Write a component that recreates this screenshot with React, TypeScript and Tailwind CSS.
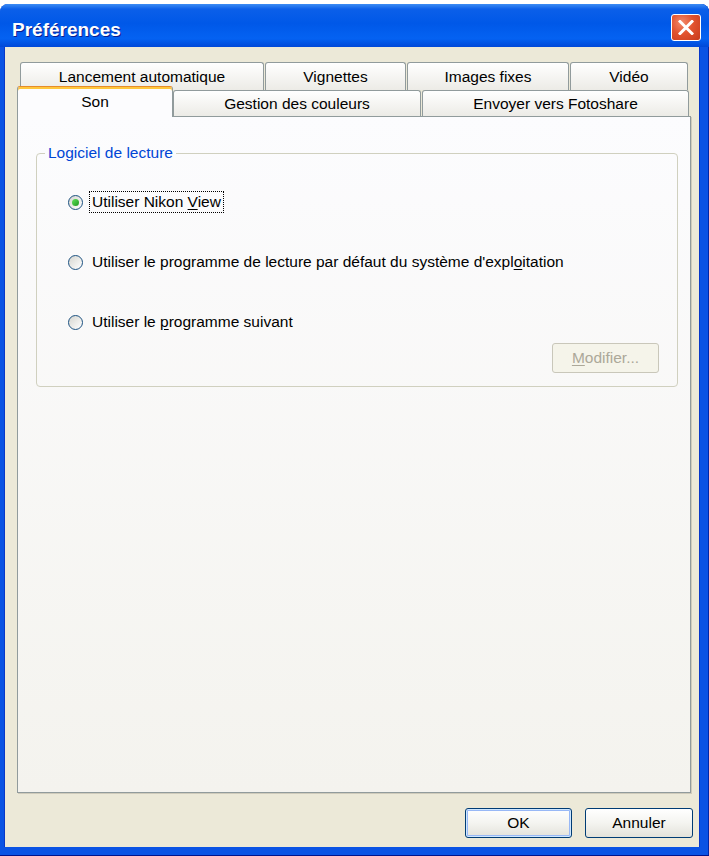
import React from 'react';

// Windows XP "Préférences" dialog, tab "Son"

const Tab: React.FC<{ label: string; className: string }> = ({ label, className }) => (
  <div
    className={`flex items-center justify-center border border-b-0 border-[#919b9c] rounded-t-[3px] bg-gradient-to-b from-white to-[#ecebe6] text-black ${className}`}
  >
    {label}
  </div>
);

const Radio: React.FC<{ checked?: boolean }> = ({ checked }) => (
  <span className="flex items-center justify-center w-[15px] h-[15px] shrink-0 rounded-full border border-[#1c5180] bg-gradient-to-br from-[#d6d6d0] to-white">
    {checked && <span className="w-[7px] h-[7px] rounded-full bg-gradient-to-br from-[#5ee25a] to-[#1e9a1e]" />}
  </span>
);

const RadioRow: React.FC<{ checked?: boolean; focused?: boolean; children: React.ReactNode; className: string }> = ({
  checked,
  focused,
  children,
  className,
}) => (
  <div className={`flex items-center h-[24px] pl-[31px] ${className}`}>
    <Radio checked={checked} />
    <span
      className={`ml-[6px] px-[2px] leading-[20px] border border-dotted ${focused ? 'border-black' : 'border-transparent'}`}
    >
      {children}
    </span>
  </div>
);

const XpButton: React.FC<{ children: React.ReactNode; className: string }> = ({ children, className }) => (
  <div
    className={`flex items-center justify-center h-[30px] rounded-[3px] border border-[#003c74] bg-gradient-to-b from-white via-[#f4f4f0] to-[#e3e2da] text-black ${className}`}
  >
    {children}
  </div>
);

export default function App() {
  return (
    <div className="w-[709px] h-[856px] bg-white font-['Liberation_Sans',Arial,sans-serif] text-[15.5px] text-black">
      <div className="mt-[4px] h-[852px] flex flex-col rounded-t-[8px] bg-[#0a53e4] shadow-[inset_0_-1px_0_#00138c,inset_-1px_0_0_#0027a8]">
        {/* title bar */}
        <div className="flex items-start justify-between h-[43px] shrink-0 rounded-t-[8px] bg-[linear-gradient(180deg,#3c8cf3_0%,#0b5fe9_12%,#0058e8_45%,#0462f2_80%,#0048d8_100%)]">
          <span className="ml-[12px] mt-[16px] leading-[20px] text-[19px] font-bold text-white [text-shadow:1px_1px_0_#0a1f8f]">
            Préférences
          </span>
          <div className="mt-[10px] mr-[8px] w-[30px] h-[27px] rounded-[3px] border border-white bg-[radial-gradient(circle_at_35%_30%,#f28a6c_0%,#e2532f_45%,#c83a1c_100%)] flex items-center justify-center">
            <svg width="16" height="15" viewBox="0 0 16 15">
              <path d="M2 1.5 L14 13.5 M14 1.5 L2 13.5" stroke="white" strokeWidth="3" strokeLinecap="square" />
            </svg>
          </div>
        </div>

        {/* client area */}
        <div className="flex-1 ml-[4px] mr-[9px] mb-[9px] bg-[#ece9d8] pt-[15px] pl-[12px] pr-[8px] flex flex-col border-l border-r border-[#0838c8]">
          {/* tab rows */}
          <div className="flex h-[28px] pl-[3px] gap-[1px]">
            <Tab label="Lancement automatique" className="w-[244px]" />
            <Tab label="Vignettes" className="w-[141px]" />
            <Tab label="Images fixes" className="w-[162px]" />
            <Tab label="Vidéo" className="w-[118px]" />
          </div>
          <div className="flex items-end h-[30px] -mt-[4px] relative">
            <div className="relative z-10 -mb-[1px] h-[31px] w-[156px] flex items-center justify-center rounded-t-[3px] border-x border-t border-x-[#919b9c] border-t-[#e68b2c] shadow-[inset_0_2px_0_#ffc73c] bg-[#fcfcfe]">
              Son
            </div>
            <Tab label="Gestion des couleurs" className="h-[26px] w-[248px]" />
            <Tab label="Envoyer vers Fotoshare" className="h-[26px] w-[267px] ml-[1px]" />
          </div>

          {/* tab page */}
          <div className="h-[677px] shrink-0 border border-[#919b9c] bg-gradient-to-b from-[#fcfcfe] to-[#f4f3ee] shadow-[1px_1px_0_#cfcbbb] flex flex-col">
            <fieldset className="mt-[27px] ml-[18px] mr-[12px] pb-[13px] border border-[#d0d0bf] rounded-[4px]">
              <legend className="ml-[8px] px-[3px] leading-[18px] text-[#0046d5]">Logiciel de lecture</legend>

              <RadioRow checked focused className="mt-[28px]">
                Utiliser Nikon <span className="underline underline-offset-2">V</span>iew
              </RadioRow>
              <RadioRow className="mt-[36px]">
                Utiliser le programme de lecture par défaut du système d'expl
                <span className="underline underline-offset-2">o</span>itation
              </RadioRow>
              <RadioRow className="mt-[36px]">
                Utiliser le <span className="underline underline-offset-2">p</span>rogramme suivant
              </RadioRow>

              <div className="mt-[9px] flex justify-end pr-[18px]">
                <div className="flex items-center justify-center w-[107px] h-[30px] rounded-[3px] border border-[#c9c7ba] bg-[#f5f4ea] text-[#aca899]">
                  <span>
                    <span className="underline underline-offset-2">M</span>odifier...
                  </span>
                </div>
              </div>
            </fieldset>
          </div>

          {/* dialog buttons */}
          <div className="mt-[15px] flex justify-end gap-[13px] -mr-[2px]">
            <XpButton className="w-[107px] shadow-[inset_0_0_0_1px_#cee7ff,inset_0_0_0_2px_#98b8f6]">OK</XpButton>
            <XpButton className="w-[108px]">Annuler</XpButton>
          </div>
        </div>
      </div>
    </div>
  );
}
